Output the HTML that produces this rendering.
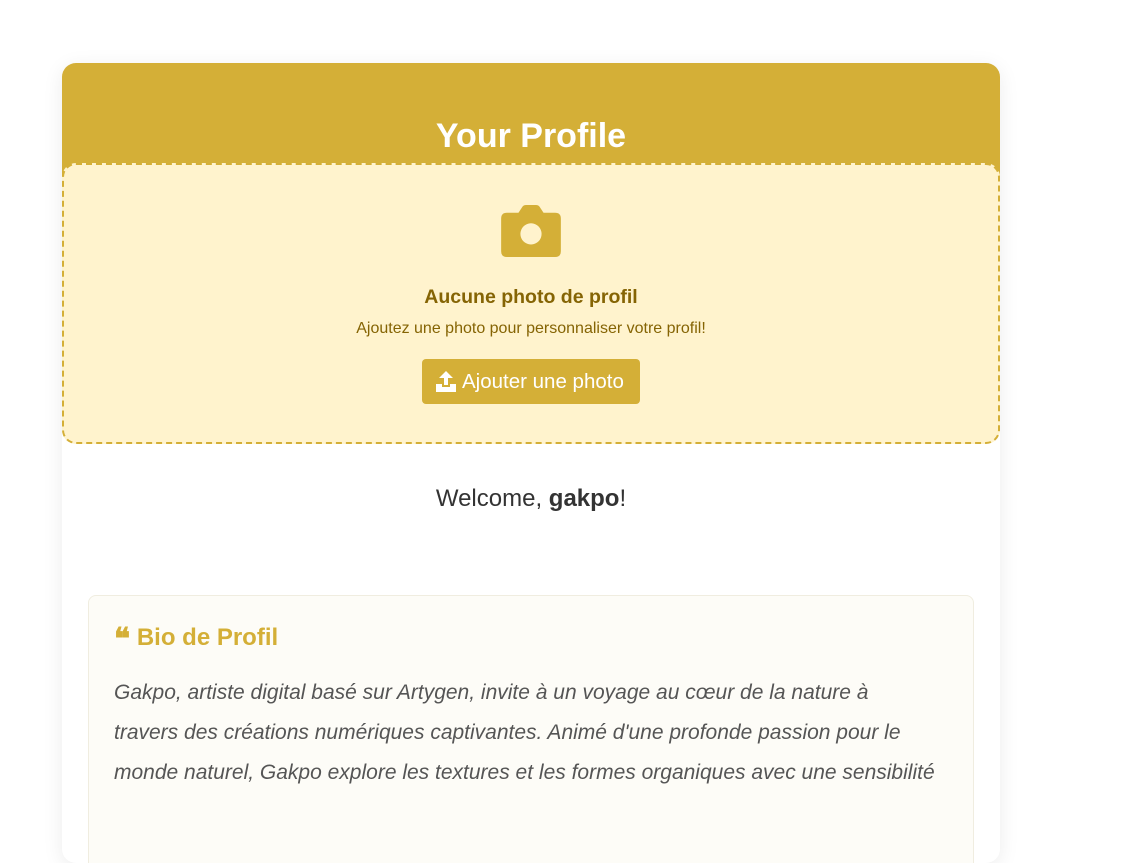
<!DOCTYPE html>
<html><head><meta charset="utf-8"><style>
*{box-sizing:border-box;margin:0;padding:0}
body{width:1134px;height:795px;overflow:hidden;background:#fff;font-family:"Liberation Sans",sans-serif;position:relative}
.card{position:absolute;left:62px;top:63px;width:938px;height:800px;background:#fff;border-radius:14px;box-shadow:0 4px 20px rgba(0,0,0,0.08);overflow:hidden}
.head{position:absolute;left:0;top:0;width:938px;height:120px;background:#d4af37}
.head h1{position:absolute;top:53px;width:100%;text-align:center;color:#fff;font-size:34px;font-weight:bold;line-height:40px}
.drop{position:absolute;left:0;top:100px;width:938px;height:281px;background:#fff3cd;border:2px dashed #d4af37;border-radius:14px}
.cam{position:absolute;left:437px;top:40px}
.t1{position:absolute;top:121px;width:100%;text-align:center;color:#856404;font-weight:bold;font-size:19.5px}
.t2{position:absolute;top:155px;width:100%;text-align:center;color:#856404;font-size:16px}
.btn{position:absolute;left:358px;top:194px;width:218px;height:45px;background:#d4af37;border-radius:4px;color:#fff;font-size:20.5px;line-height:45px;padding-left:40px;white-space:nowrap}
.btn svg{position:absolute;left:14px;top:12px}
.wel{position:absolute;top:422px;width:100%;text-align:center;font-size:24px;color:#333}
.bio{position:absolute;left:26px;top:532px;width:886px;height:300px;background:#fdfcf7;border:1px solid #f0ede0;border-radius:8px;padding:24px 25px}
.bio h2{color:#d4af37;font-size:24px;font-weight:bold;line-height:36px}
.bio h2 span{font-size:30px;vertical-align:-4px}
.bio p{margin-top:15px;font-style:italic;color:#555;font-size:21px;line-height:40px;white-space:nowrap}
</style></head><body>
<div class="card">
<div class="head"><h1>Your Profile</h1></div>
<div class="drop">
<svg class="cam" width="60" height="52" viewBox="0 0 62 54"><path d="M18 8 L22 2 Q23 0 26 0 H36 Q39 0 40 2 L44 8 H56 Q62 8 62 14 V48 Q62 54 56 54 H6 Q0 54 0 48 V14 Q0 8 6 8Z" fill="#d4af37"/><circle cx="31" cy="30" r="11" fill="#fff3cd"/></svg>
<div class="t1">Aucune photo de profil</div>
<div class="t2">Ajoutez une photo pour personnaliser votre profil!</div>
<div class="btn"><svg width="20" height="21" viewBox="0 0 20 21"><path d="M10 0 L17 7 H12 V14 H8 V7 H3Z" fill="#fff"/><path d="M0 13 H6 V16 H14 V13 H20 V21 H0Z" fill="#fff"/></svg>Ajouter une photo</div>
</div>
<div class="wel">Welcome, <b>gakpo</b>!</div>
<div class="bio"><h2><span>❝</span> Bio de Profil</h2>
<p>Gakpo, artiste digital basé sur Artygen, invite à un voyage au cœur de la nature à<br>travers des créations numériques captivantes. Animé d'une profonde passion pour le<br>monde naturel, Gakpo explore les textures et les formes organiques avec une sensibilité</p></div>
</div>
</body></html>
